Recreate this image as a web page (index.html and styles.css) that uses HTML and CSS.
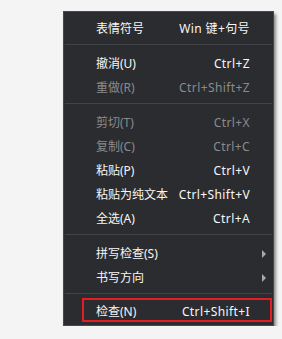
FILE: index.html
```html
<!DOCTYPE html>
<html lang="zh-CN">
<head>
  <meta charset="UTF-8" />
  <meta name="viewport" content="width=device-width, initial-scale=1" />
  <title>右键菜单</title>
  <link rel="stylesheet" href="styles.css">
</head>
<body>
  <div class="context-menu">
    <div class="menu-item">
      <span class="item-label">表情符号</span>
      <span class="item-key">Win 键+句号</span>
    </div>

    <div class="menu-sep"></div>

    <div class="menu-item">
      <span class="item-label">撤消(U)</span>
      <span class="item-key">Ctrl+Z</span>
    </div>
    <div class="menu-item disabled">
      <span class="item-label">重做(R)</span>
      <span class="item-key">Ctrl+Shift+Z</span>
    </div>

    <div class="menu-sep"></div>

    <div class="menu-item disabled">
      <span class="item-label">剪切(T)</span>
      <span class="item-key">Ctrl+X</span>
    </div>
    <div class="menu-item disabled">
      <span class="item-label">复制(C)</span>
      <span class="item-key">Ctrl+C</span>
    </div>
    <div class="menu-item">
      <span class="item-label">粘贴(P)</span>
      <span class="item-key">Ctrl+V</span>
    </div>
    <div class="menu-item">
      <span class="item-label">粘贴为纯文本</span>
      <span class="item-key">Ctrl+Shift+V</span>
    </div>
    <div class="menu-item">
      <span class="item-label">全选(A)</span>
      <span class="item-key">Ctrl+A</span>
    </div>

    <div class="menu-sep"></div>

    <div class="menu-item">
      <span class="item-label">拼写检查(S)</span>
      <span class="item-key"></span>
      <span class="item-arrow"></span>
    </div>
    <div class="menu-item">
      <span class="item-label">书写方向</span>
      <span class="item-key"></span>
      <span class="item-arrow"></span>
    </div>

    <div class="menu-sep last"></div>

    <div class="menu-item highlighted">
      <span class="item-label">检查(N)</span>
      <span class="item-key">Ctrl+Shift+I</span>
    </div>
  </div>
</body>
</html>
```

FILE: styles.css
```css
body {
  margin: 0;
  padding: 11px 0 0 63px;
  background-color: #f4f4f4;
  font-family: "Noto Sans", "Noto Sans CJK SC", sans-serif;
  font-size: 12px;
}

.context-menu {
  width: 209px;
  padding: 4px 0 2px;
  background: #2b2c2f;
  border: 1px solid #46484b;
  box-shadow: 2px 3px 3px rgba(0, 0, 0, 0.45);
  color: #f7f7f7;
}

.menu-item {
  position: relative;
  box-sizing: border-box;
  display: grid;
  grid-template-columns: 1fr auto 23px;
  align-items: center;
  height: 24px;
  padding: 2px 0 0 32px;
  white-space: nowrap;
  line-height: 18px;
}

.menu-item.disabled {
  color: #8a8b8d;
}

.item-key {
  text-align: right;
  letter-spacing: 0.4px;
}

.item-arrow {
  width: 0;
  height: 0;
  margin-left: 12px;
  border-left: 4px solid #a8a8a8;
  border-top: 4px solid transparent;
  border-bottom: 4px solid transparent;
}

.menu-sep {
  height: 1px;
  margin: 4px 1px 6px;
  background: #424346;
}

.menu-sep.last {
  margin-bottom: 5px;
}

/* annotation box drawn over the last entry */
.menu-item.highlighted::after {
  content: "";
  position: absolute;
  left: 18px;
  right: 1px;
  top: -1px;
  bottom: 1px;
  border: 2px solid #e51c23;
}
```
